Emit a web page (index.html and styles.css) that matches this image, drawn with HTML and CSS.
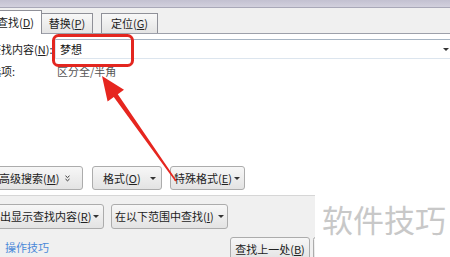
FILE: index.html
```html
<!DOCTYPE html>
<html lang="zh">
<head>
<meta charset="utf-8">
<link rel="stylesheet" href="styles.css">
</head>
<body>
<div class="titlebar"></div>
<div class="tabbar">
  <div class="tab active">查找(<u>D</u>)</div>
  <div class="tab t2">替换(<u>P</u>)</div>
  <div class="tab t3">定位(<u>G</u>)</div>
</div>
<div class="content">
  <div class="field-row">
    <span class="label">查找内容(<u>N</u>):</span>
    <div class="input"><span class="value">梦想</span><span class="caret"></span></div>
  </div>
  <div class="opt-row">
    <span class="label">选项:</span>
    <span class="opt">区分全/半角</span>
  </div>
  <div class="btn-row1">
    <div class="btn b-adv">高级搜索(<u>M</u>)<svg class="dbl" width="5" height="7" viewBox="0 0 5 7"><path d="M0.5 0.8 L2.5 2.6 L4.5 0.8 M0.5 4 L2.5 5.8 L4.5 4" fill="none" stroke="#333" stroke-width="1"/></svg></div>
    <div class="btn b-fmt">格式(<u>O</u>)<span class="caret"></span></div>
    <div class="btn b-sp">特殊格式(<u>E</u>)<span class="caret"></span></div>
  </div>
</div>
<div class="bottom">
  <div class="panel">
    <div class="row2">
      <div class="btn b-hl">突出显示查找内容(<u>R</u>)<span class="caret"></span></div>
      <div class="btn b-in">在以下范围中查找(<u>I</u>)<span class="caret"></span></div>
    </div>
    <div class="row3">
      <span class="link">操作技巧</span>
      <div class="btn b-prev">查找上一处(<u>B</u>)</div>
      <div class="btn b-cut"></div>
    </div>
  </div>
  <div class="watermark">软件技巧</div>
</div>
<svg class="annot" width="450" height="257" viewBox="0 0 450 257">
  <rect x="53.5" y="35.5" width="79" height="30" rx="5" ry="5" fill="none" stroke="#e3261f" stroke-width="3"/>
  <polygon points="102,76 124,89.8 117.8,94.2 176.6,180.6 175.4,181.4 113.8,97 107.6,101.4" fill="#e6261f"/>
</svg>
</body>
</html>
```
FILE: styles.css
```css
html, body {
  margin: 0;
  padding: 0;
}
body {
  width: 450px;
  height: 257px;
  overflow: hidden;
  position: relative;
  background: #fff;
  font-family: "Noto Sans CJK SC", "Noto Sans", sans-serif;
  font-size: 11px;
  color: #222;
  line-height: 1;
}
u { text-decoration: underline; text-underline-offset: 1px; }

.titlebar {
  height: 7px;
  background: linear-gradient(#c3c1d1, #d2d0dd);
  border-bottom: 1px solid #a9a8b8;
}
.tabbar {
  height: 26px;
  box-sizing: border-box;
  background: #f0f0f0;
  border-bottom: 1px solid #9da0aa;
  display: flex;
  align-items: flex-end;
}
.tab {
  box-sizing: border-box;
  height: 20px;
  border: 1px solid #8f9098;
  border-bottom: none;
  background: linear-gradient(#f8f8f8, #e4e4e4);
  display: flex;
  align-items: center;
  justify-content: center;
  color: #222;
}
.tab.active {
  height: 24px;
  width: 50px;
  margin-left: -8px;
  margin-bottom: -1px;
  background: #fff;
  justify-content: flex-start;
  padding-left: 4px;
  position: relative;
}
.tab.t2 { width: 51px; border-left: none; }
.tab.t3 { width: 57px; margin-left: 8px; }

.content {
  height: 161px;
  box-sizing: border-box;
  padding-top: 5px;
  margin-left: -10px;
  margin-right: -4px;
}
.field-row {
  display: flex;
  align-items: center;
  height: 20px;
}
.label {
  width: 65px;
  flex: none;
  white-space: nowrap;
}
.input {
  flex: 1;
  height: 20px;
  box-sizing: border-box;
  border: 1px solid #dce5ee;
  border-top-color: #a6b4c3;
  display: flex;
  align-items: center;
  justify-content: space-between;
  padding: 0 4px 0 4px;
}
.value { color: #111; }
.opt-row {
  display: flex;
  align-items: center;
  height: 16px;
  margin-top: 4px;
}
.opt { margin-left: 2px; color: #555; }

.caret {
  width: 0;
  height: 0;
  border-left: 3px solid transparent;
  border-right: 3px solid transparent;
  border-top: 3px solid #333;
  flex: none;
}
.btn {
  box-sizing: border-box;
  height: 24px;
  border: 1px solid #acacac;
  border-radius: 3px;
  background: linear-gradient(#f7f7f7, #e3e3e3);
  display: flex;
  align-items: center;
  white-space: nowrap;
  color: #222;
  flex: none;
}
.btn-row1 {
  display: flex;
  margin-top: 87px;
  height: 24px;
}
.b-adv { width: 89px; margin-left: 4px; padding-left: 4px; }
.dbl { margin-left: 6px; }
.b-fmt { width: 70px; margin-left: 9px; padding-left: 10px; }
.b-fmt .caret { margin-left: auto; margin-right: 5px; }
.b-sp { width: 75px; margin-left: 8px; padding-left: 3px; }
.b-sp .caret { margin-left: auto; margin-right: 4px; }

.bottom {
  display: flex;
  height: 62px;
}
.panel {
  width: 315px;
  flex: none;
  box-sizing: border-box;
  border-top: 1px solid #d6d6d6;
  background: #f0f0f0;
  overflow: hidden;
}
.row2 {
  display: flex;
  margin-top: 8px;
}
.row2 .btn { height: 25px; }
.b-hl { width: 119px; margin-left: -15px; padding-left: 3px; }
.b-hl .caret { margin-left: auto; margin-right: 4px; }
.b-in { width: 117px; margin-left: 7px; padding-left: 3px; }
.b-in .caret { margin-left: auto; margin-right: 3px; }
.row3 {
  display: flex;
  align-items: flex-start;
  margin-top: 8px;
}
.link {
  margin-left: 5px;
  margin-top: 5px;
  color: #4a88d8;
}
.b-prev {
  width: 80px;
  margin-left: auto;
  justify-content: center;
}
.b-cut {
  width: 5px;
  margin-left: 3px;
  margin-right: -3px;
}
.watermark {
  flex: 1;
  padding: 8px 0 0 7px;
  font-size: 31px;
  color: #c8c8c8;
  white-space: nowrap;
}
.annot {
  position: absolute;
  left: 0;
  top: 0;
  pointer-events: none;
}
```
